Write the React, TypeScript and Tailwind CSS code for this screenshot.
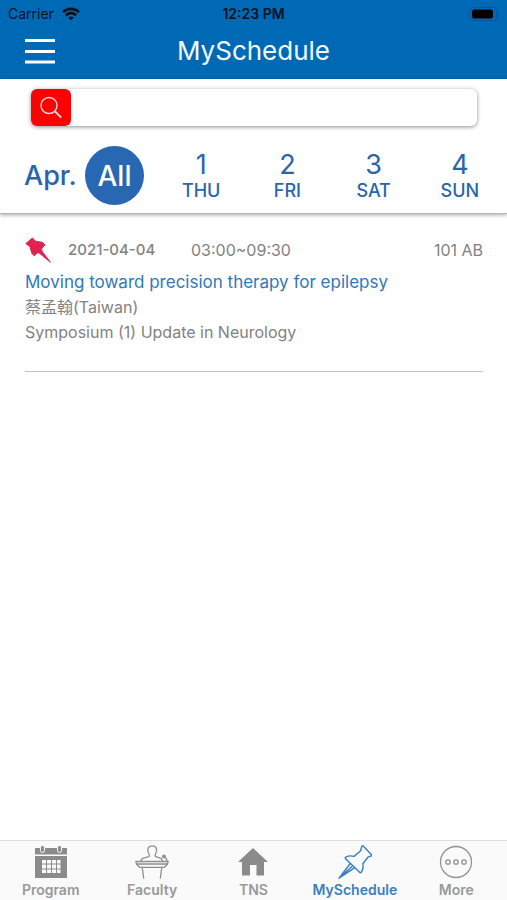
import React from 'react';

interface Day {
  date: string;
  weekday: string;
}

interface Session {
  date: string;
  time: string;
  room: string;
  title: string;
  speaker: string;
  track: string;
}

const days: Day[] = [
  { date: '1', weekday: 'THU' },
  { date: '2', weekday: 'FRI' },
  { date: '3', weekday: 'SAT' },
  { date: '4', weekday: 'SUN' },
];

const sessions: Session[] = [
  {
    date: '2021-04-04',
    time: '03:00~09:30',
    room: '101 AB',
    title: 'Moving toward precision therapy for epilepsy',
    speaker: '蔡孟翰(Taiwan)',
    track: 'Symposium (1) Update in Neurology',
  },
];

function StatusBar() {
  return (
    <div className="grid grid-cols-3 items-center h-7 px-2 text-sm text-[#04131f]">
      <div className="flex items-center gap-2">
        <span>Carrier</span>
        <svg className="w-[18px] h-[14px]" viewBox="0 0 18 14" fill="none" stroke="currentColor" strokeWidth="2.6">
          <path d="M1 5.2C5.4 .8 12.6 .8 17 5.2" />
          <path d="M3.9 8.2c2.9-2.8 7.3-2.8 10.2 0" />
          <path d="M9 13.4 6.2 10.5c1.6-1.4 4-1.4 5.6 0z" fill="currentColor" stroke="none" />
        </svg>
      </div>
      <span className="text-center font-semibold">12:23 PM</span>
      <svg className="w-[30px] h-[14px] justify-self-end" viewBox="0 0 30 14">
        <rect x="1" y=".5" width="27" height="13" rx="4" fill="none" stroke="#04559a" />
        <rect x="3" y="2.5" width="21" height="9" rx="2.5" fill="#000" />
        <path d="M28.6 4.8c1.7.8 1.7 3.6 0 4.4z" fill="#04559a" />
      </svg>
    </div>
  );
}

function Header() {
  return (
    <header className="bg-[#0069b6]">
      <StatusBar />
      <div className="grid grid-cols-[1fr_auto_1fr] items-center h-[51px] px-6 pb-1.5">
        <button aria-label="Menu" className="justify-self-start text-white">
          <svg className="w-8 h-7" viewBox="0 0 32 28" stroke="currentColor" strokeWidth="3">
            <path d="M1 3.5h30M1 14.5h30M1 25h30" />
          </svg>
        </button>
        <h1 className="text-[26px] leading-8 text-[#f2faff]">MySchedule</h1>
      </div>
    </header>
  );
}

function SearchBar() {
  return (
    <form
      className="flex h-[37px] ml-[31px] mr-[30px] rounded-md bg-white shadow-[0_1px_4px_rgba(0,0,0,0.45)]"
      onSubmit={(e) => e.preventDefault()}
    >
      <button aria-label="Search" className="w-10 shrink-0 rounded-md bg-[#fe0000] flex items-center justify-center">
        <svg className="w-6 h-6" viewBox="0 0 24 24" fill="none" stroke="#ffd9d9" strokeWidth="1.4">
          <circle cx="10" cy="9.5" r="8" />
          <path d="m15.8 15.2 6.4 6.4" strokeWidth="2" />
        </svg>
      </button>
      <input type="text" aria-label="Search sessions" className="flex-1 min-w-0 px-3 bg-transparent outline-none" />
    </form>
  );
}

function DayPicker() {
  return (
    <div className="flex items-center mt-5 pl-6 text-[#2965ad]">
      <span className="w-[61px] pt-0.5 text-[27px] font-medium">Apr.</span>
      <button className="w-[59px] h-[59px] shrink-0 rounded-full bg-[#2867b2] text-white text-[28px] font-medium">
        All
      </button>
      <div className="flex-1 grid grid-cols-4 ml-3.5 mr-1">
        {days.map((day) => (
          <button key={day.date} className="flex flex-col items-center pt-0.5">
            <span className="text-[27px] leading-7">{day.date}</span>
            <span className="text-[18px] leading-6 font-medium">{day.weekday}</span>
          </button>
        ))}
      </div>
    </div>
  );
}

function PinIcon() {
  return (
    <svg
      className="w-[26px] h-[26px]"
      viewBox="0 0 26 26"
      fill="#e0244f"
      stroke="#e0244f"
      strokeLinejoin="round"
    >
      <path d="M7.5 1 10.5 4.200 17.200 5.300 20 7.800 16.800 11.200 16.800 14 25.400 25.300 14.200 16 12.200 15.800 9.300 18.800 6.800 16.200 4.900 9.500.8 6.600z" />
    </svg>
  );
}

function SessionCard({ session }: { session: Session }) {
  return (
    <li className="pb-[26px] border-b border-[#c4c4c4] text-base text-[#828282]">
      <div className="flex items-center h-7">
        <PinIcon />
        <span className="ml-[17px] w-[123px] text-[15px] font-medium">{session.date}</span>
        <span>{session.time}</span>
        <span className="ml-auto">{session.room}</span>
      </div>
      <a href="#session" className="block mt-1.5 leading-[25px] text-[17px] text-[#2f78bb]">
        {session.title}
      </a>
      <p className="leading-6">{session.speaker}</p>
      <p className="leading-[26px]">{session.track}</p>
    </li>
  );
}

function CalendarIcon() {
  return (
    <svg className="w-8 h-[34px]" viewBox="0 0 32 34">
      <path d="M0 3h32v6.5H0zM0 11h32v22H0z" fill="#8b8b8b" />
      <path
        d="M5.5 2.5a2 2 0 0 1 4 0v3a2 2 0 0 1-4 0zM22.5 2.5a2 2 0 0 1 4 0v3a2 2 0 0 1-4 0z"
        fill="#8b8b8b"
        stroke="#fafafa"
      />
      <path
        d="M7 15h4v3.500H7zm5 0h4v3.500h-4zm5 0h4v3.500h-4zm5 0h3.500v3.500H22zM7 19.500h4v4H7zm5 0h4v4h-4zm5 0h4v4h-4zm5 0h3.500v4H22zM7 24.500h4V28H7zm5 0h4V28h-4zm5 0h4V28h-4zm5 0h3.500V28H22z"
        fill="#fafafa"
      />
    </svg>
  );
}

function PodiumIcon() {
  return (
    <svg
      className="w-[34px] h-[34px]"
      viewBox="0 0 34 34"
      fill="none"
      stroke="#8f8f8f"
      strokeWidth="1.3"
      strokeLinejoin="round"
      strokeLinecap="round"
    >
      <path d="M6 16.5c0-1.800.8-2.800 2.500-3.300l4.500-1.300c1.500-.5 1.700-1.600.9-2.900C11.600 5.200 12.800.8 17.200.8s5.600 4.400 3.300 8.200c-.8 1.300-.6 2.400.9 2.900l4 1.300c1.400.5 2 1.400 2.200 3.300" />
      <path d="M.8 16.500h32.400l-.8 2.800-2.900 3H4.500l-2.900-3zM1.800 19h30.400" />
      <path d="M7.200 22.500 8.700 33.200M26.800 22.500 25.300 33.200" />
      <path d="M31.800 16.300c.3-1.600-.4-3.400-2.600-4.600" />
      <circle cx="28.900" cy="11.400" r="1.300" fill="#8f8f8f" />
    </svg>
  );
}

function HomeIcon() {
  return (
    <svg className="w-[30px] h-[34px]" viewBox="0 0 30 34" fill="#8b8b8b">
      <path d="M15 3 30 17H26V30.500H18.500V20H12V30.500H4V17H0z" />
    </svg>
  );
}

function PushpinIcon() {
  return (
    <svg
      className="w-[34px] h-[34px]"
      viewBox="0 0 34 34"
      fill="none"
      stroke="#397fc0"
      strokeWidth="1.4"
      strokeLinejoin="round"
    >
      <path d="M23.800 1.200c.6-.6 1-.6 1.600 0l7.900 8.300c.5.6.4 1.100-.2 1.500l-3.200 1.200-5.100 6.500c.8 3.600.1 6.200-1.600 8.600-.5.6-1.100.6-1.600 0L7.600 13.700c-.6-.6-.5-1.200.1-1.600 2.500-1.300 5.100-1.700 8.400-.7l6.500-5.600z" />
      <path d="M12.300 18.500 1 33.200 16.400 22.800M1 33.200l13.500-12.300" />
    </svg>
  );
}

function MoreIcon() {
  return (
    <svg className="w-[34px] h-[34px]" viewBox="0 0 34 34" fill="none" stroke="#929292" strokeWidth="1.3">
      <circle cx="17" cy="17" r="15.5" />
      <circle cx="9" cy="17" r="2.2" />
      <circle cx="17" cy="17" r="2.2" />
      <circle cx="25" cy="17" r="2.2" />
    </svg>
  );
}

const tabs = [
  { label: 'Program', icon: CalendarIcon },
  { label: 'Faculty', icon: PodiumIcon },
  { label: 'TNS', icon: HomeIcon },
  { label: 'MySchedule', icon: PushpinIcon, active: true },
  { label: 'More', icon: MoreIcon },
];

function TabBar() {
  return (
    <nav className="grid grid-cols-5 pt-1 border-t border-[#dedede] bg-[#fafafa]">
      {tabs.map(({ label, icon: Icon, active }) => (
        <a
          key={label}
          href={`#${label.toLowerCase()}`}
          aria-current={active ? 'page' : undefined}
          className={`flex flex-col items-center text-sm font-semibold ${active ? 'text-[#397fc0]' : 'text-[#999]'}`}
        >
          <Icon />
          <span className="leading-[21px]">{label}</span>
        </a>
      ))}
    </nav>
  );
}

export default function App() {
  return (
    <div className="flex flex-col min-h-screen bg-white font-[Inter,'Noto_Sans_CJK_TC',sans-serif]">
      <Header />
      <section className="pt-2.5 pb-2 border-b border-[#b5b5b5] shadow-[0_1px_4px_rgba(0,0,0,0.35)]">
        <SearchBar />
        <DayPicker />
      </section>
      <main className="flex-1 pt-[22px] pl-[25px] pr-6">
        <ul>
          {sessions.map((session) => (
            <SessionCard key={session.title} session={session} />
          ))}
        </ul>
      </main>
      <TabBar />
    </div>
  );
}
